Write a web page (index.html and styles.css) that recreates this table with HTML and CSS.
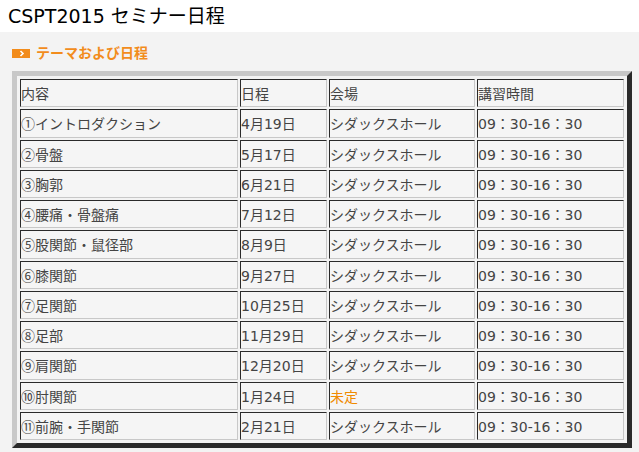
FILE: index.html
```html
<!DOCTYPE html>
<html lang="ja">
<head>
<meta charset="utf-8">
<title>CSPT2015 セミナー日程</title>
<link rel="stylesheet" href="styles.css">
</head>
<body>
<header class="page-title">CSPT2015 セミナー日程</header>
<main class="content">
  <h2 class="section-heading">
    <svg class="heading-icon" width="18" height="9" viewBox="0 0 18 9" aria-hidden="true">
      <rect width="18" height="9" fill="#f28c1c"/>
      <path d="M8.5 2 L11 4.5 L8.5 7" fill="none" stroke="#ffffff" stroke-width="1.6"/>
    </svg>
    <span>テーマおよび日程</span>
  </h2>
  <table class="schedule">
    <colgroup>
      <col class="c1"><col class="c2"><col class="c3"><col class="c4">
    </colgroup>
    <tr><td>内容</td><td>日程</td><td>会場</td><td>講習時間</td></tr>
    <tr><td><span class="num">①</span>イントロダクション</td><td>4月19日</td><td>シダックスホール</td><td>09：30-16：30</td></tr>
    <tr><td><span class="num">②</span>骨盤</td><td>5月17日</td><td>シダックスホール</td><td>09：30-16：30</td></tr>
    <tr><td><span class="num">③</span>胸郭</td><td>6月21日</td><td>シダックスホール</td><td>09：30-16：30</td></tr>
    <tr><td><span class="num">④</span>腰痛・骨盤痛</td><td>7月12日</td><td>シダックスホール</td><td>09：30-16：30</td></tr>
    <tr><td><span class="num">⑤</span>股関節・鼠径部</td><td>8月9日</td><td>シダックスホール</td><td>09：30-16：30</td></tr>
    <tr><td><span class="num">⑥</span>膝関節</td><td>9月27日</td><td>シダックスホール</td><td>09：30-16：30</td></tr>
    <tr><td><span class="num">⑦</span>足関節</td><td>10月25日</td><td>シダックスホール</td><td>09：30-16：30</td></tr>
    <tr><td><span class="num">⑧</span>足部</td><td>11月29日</td><td>シダックスホール</td><td>09：30-16：30</td></tr>
    <tr><td><span class="num">⑨</span>肩関節</td><td>12月20日</td><td>シダックスホール</td><td>09：30-16：30</td></tr>
    <tr><td><span class="num">⑩</span>肘関節</td><td>1月24日</td><td class="tbd">未定</td><td>09：30-16：30</td></tr>
    <tr><td><span class="num">⑪</span>前腕・手関節</td><td>2月21日</td><td>シダックスホール</td><td>09：30-16：30</td></tr>
  </table>
</main>
</body>
</html>
```
FILE: styles.css
```css
html, body {
  margin: 0;
  padding: 0;
}
body {
  background: #f3f3f3;
  font-family: "DejaVu Sans", "Noto Sans CJK JP", sans-serif;
  color: #444444;
}
.page-title {
  background: #ffffff;
  height: 32px;
  line-height: 32px;
  padding-left: 8px;
  font-size: 19px;
  color: #000000;
}
.content {
  padding: 11px 7px 4px 12px;
}
.section-heading {
  margin: 0 0 8px 0;
  height: 20px;
  display: flex;
  align-items: center;
  gap: 6px;
  font-size: 14px;
  font-weight: bold;
  color: #f28c1c;
  line-height: 20px;
}
.heading-icon {
  display: block;
  flex: none;
  margin-top: 1px;
}
.schedule {
  box-sizing: border-box;
  width: 620px;
  table-layout: fixed;
  border-collapse: separate;
  border-spacing: 2px;
  padding: 1px;
  border-style: solid;
  border-width: 5px;
  border-color: #c8c8c8 #2a2a2a #2a2a2a #c8c8c8;
  background: #f3f3f3;
  font-size: 14px;
}
.c1 { width: 218px; }
.c2 { width: 87px; }
.c3 { width: 146px; }
.c4 { width: 147px; }
.schedule td {
  box-sizing: border-box;
  height: 28.25px;
  padding: 0;
  vertical-align: middle;
  background: #f5f5f5;
  border-style: solid;
  border-width: 1px;
  border-color: #2a2a2a #c8c8c8 #c8c8c8 #2a2a2a;
  white-space: nowrap;
  overflow: hidden;
  color: #444444;
}
.schedule .num {
  font-family: "Noto Sans CJK JP", sans-serif;
}
.schedule td.tbd {
  color: #f08a00;
}
```
